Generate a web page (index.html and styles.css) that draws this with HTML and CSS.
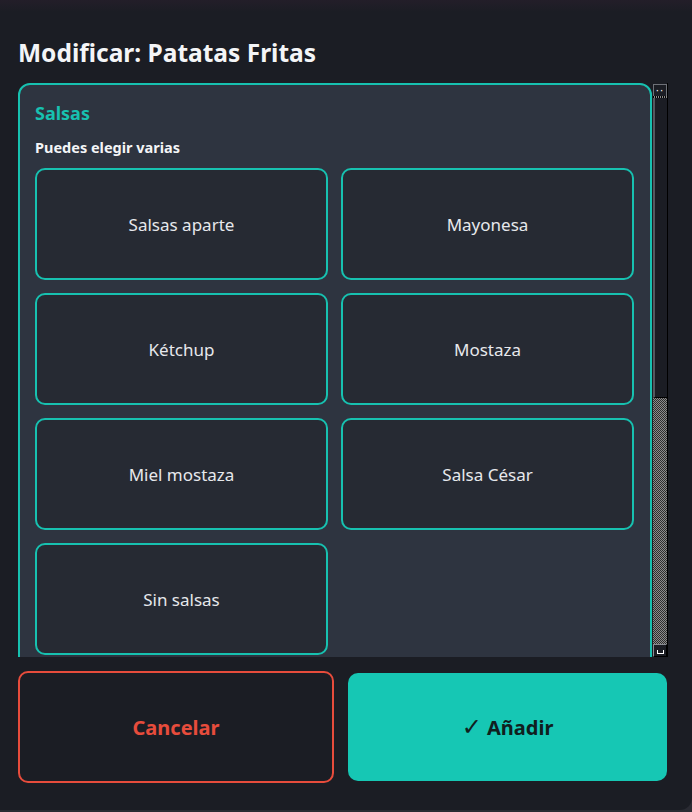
FILE: index.html
```html
<!DOCTYPE html>
<html lang="es">
<head>
    <meta charset="UTF-8">
    <meta name="viewport" content="width=device-width, initial-scale=1.0">
    <title>Modificar producto</title>
    <link rel="stylesheet" href="styles.css">
</head>
<body>
    <div class="dialog">
        <h2 class="title">Modificar: Patatas Fritas</h2>

        <div class="pane">
            <div class="scroll">
                <section class="group">
                    <h3 class="group-name">Salsas</h3>
                    <p class="hint">Puedes elegir varias</p>
                    <div class="options">
                        <button class="option">Salsas aparte</button>
                        <button class="option">Mayonesa</button>
                        <button class="option">Kétchup</button>
                        <button class="option">Mostaza</button>
                        <button class="option">Miel mostaza</button>
                        <button class="option">Salsa César</button>
                        <button class="option">Sin salsas</button>
                    </div>
                </section>
            </div>
            <div class="scrollbar">
                <div class="sb-btn sb-up"><span class="dots">··</span></div>
                <div class="sb-dash"></div>
                <div class="sb-thumb"></div>
                <div class="sb-track"></div>
                <div class="sb-btn sb-down"><span class="cup"></span></div>
            </div>
        </div>

        <div class="actions">
            <button class="btn btn-cancel">Cancelar</button>
            <button class="btn btn-add"><span class="check">&#10003;</span> Añadir</button>
        </div>
    </div>
</body>
</html>
```

FILE: styles.css
```css
html, body {
    margin: 0;
    padding: 0;
}
body {
    background-color: #2a2b33;
    font-family: "Noto Sans", "Open Sans", sans-serif;
    color: #ffffff;
    width: 692px;
    height: 812px;
    overflow: hidden;
}
.dialog {
    height: 810px;
    box-sizing: border-box;
    padding: 0 25px 0 18px;
    background: linear-gradient(#231e29 0, #1b1d24 12px);
    border-bottom-right-radius: 12px;
}
.title {
    margin: 0;
    padding-top: 37px;
    padding-bottom: 15px;
    font-size: 24.5px;
    line-height: 31px;
    font-weight: 700;
    color: #f4f5f7;
}

/* scroll area + drawn classic scrollbar */
.pane {
    display: flex;
    height: 574px;
    width: 650px;
}
.scroll {
    width: 635px;
    overflow-y: auto;
    scrollbar-width: none;
}
.scroll::-webkit-scrollbar {
    display: none;
}
.scrollbar {
    width: 15px;
    display: flex;
    flex-direction: column;
    padding-top: 1px;
    box-sizing: border-box;
    border-right: 1px solid #000000;
}
.sb-btn {
    height: 12px;
    box-sizing: border-box;
    background-color: #1b1d24;
    display: flex;
    align-items: center;
    justify-content: center;
}
.sb-up {
    border: 1px solid #6e7178;
    border-bottom: none;
}
.dots {
    color: #ffffff;
    font-size: 10px;
    line-height: 6px;
    letter-spacing: 1px;
    font-family: "DejaVu Sans", sans-serif;
}
.sb-down {
    height: 13px;
    border: 1px solid #000000;
    border-left-color: #8a8d93;
    border-top-color: #8a8d93;
}
.cup {
    width: 5px;
    height: 3px;
    border: 1px solid #ffffff;
    border-top: none;
    margin-top: 2px;
}
.sb-dash {
    height: 2px;
    background: repeating-linear-gradient(90deg, #000000 0 1px, #8a8a8a 1px 2px);
}
.sb-thumb {
    height: 299px;
    background-color: #1b1d24;
    border-left: 2px solid #55585f;
    border-bottom: 1px solid #000000;
}
.sb-track {
    flex: 1;
    background: repeating-conic-gradient(#2e2e2e 0 25%, #8c8c8c 0 50%) 0 0 / 2px 2px;
}

.group {
    width: 634px;
    box-sizing: border-box;
    background-color: #2e3440;
    border: 2px solid #17c1b0;
    border-radius: 12px;
    padding: 16px 16px 16px 15px;
}
.group-name {
    margin: 0 0 13px 0;
    font-size: 18px;
    line-height: 24px;
    font-weight: 700;
    color: #17c1b0;
}
.hint {
    margin: 0 0 11px 0;
    font-size: 14.5px;
    line-height: 19px;
    font-weight: 700;
    color: #f4f5f7;
}
.options {
    display: grid;
    grid-template-columns: 1fr 1fr;
    grid-auto-rows: 112px;
    gap: 13px;
}
.option {
    background-color: #262a33;
    border: 2px solid #17c1b0;
    border-radius: 10px;
    color: #e6e8ec;
    font-family: inherit;
    font-size: 17px;
    cursor: pointer;
}
.actions {
    display: grid;
    grid-template-columns: 316px 319px;
    gap: 14px;
    margin-top: 14px;
    align-items: center;
}
.btn {
    height: 112px;
    border-radius: 10px;
    font-family: inherit;
    font-size: 20px;
    font-weight: 700;
    cursor: pointer;
}
.btn-cancel {
    background-color: #1b1d24;
    border: 2px solid #e74c3c;
    color: #e74c3c;
}
.btn-add {
    height: 108px;
    background-color: #16c7b4;
    border: none;
    color: #10201e;
}
.check {
    font-family: "DejaVu Sans", sans-serif;
    font-size: 24px;
    font-weight: 700;
}
```
